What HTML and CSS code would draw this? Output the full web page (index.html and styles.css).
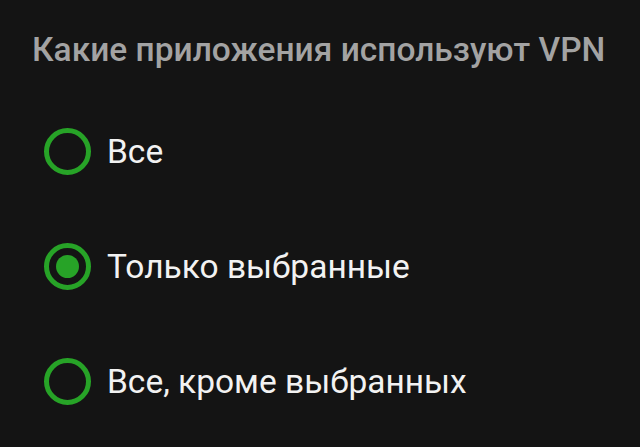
FILE: index.html
```html
<!DOCTYPE html>
<html lang="ru">

<head>
    <meta charset="UTF-8">
    <meta name="viewport" content="width=device-width, initial-scale=1.0">
    <title>VPN</title>
    <link rel="stylesheet" href="styles.css">
</head>

<body>
    <div class="screen">
        <div class="title">Какие приложения используют VPN</div>
        <div class="option">
            <span class="radio"></span>
            <span class="label">Все</span>
        </div>
        <div class="option">
            <span class="radio checked"></span>
            <span class="label">Только выбранные</span>
        </div>
        <div class="option">
            <span class="radio"></span>
            <span class="label">Все, кроме выбранных</span>
        </div>
    </div>
</body>

</html>
```

FILE: styles.css
```css
html,
body {
    margin: 0;
    height: 100%;
    background-color: #141414;
}

.screen {
    display: flex;
    flex-direction: column;
    padding: 30px 0 0 32px;
    font-family: Roboto, "Noto Sans", sans-serif;
}

.title {
    font-size: 33.5px;
    font-weight: 500;
    color: #a3a3a3;
    line-height: 40px;
    margin-bottom: 24px;
}

.option {
    display: flex;
    align-items: center;
    gap: 16px;
    height: 115px;
    padding-left: 12px;
}

.radio {
    box-sizing: border-box;
    width: 47px;
    height: 47px;
    border: 5px solid #27a327;
    border-radius: 50%;
    display: flex;
    align-items: center;
    justify-content: center;
}

.checked::after {
    content: "";
    width: 23px;
    height: 23px;
    border-radius: 50%;
    background-color: #27a327;
}

.label {
    font-size: 33.5px;
    color: #f2f2f2;
}
```
